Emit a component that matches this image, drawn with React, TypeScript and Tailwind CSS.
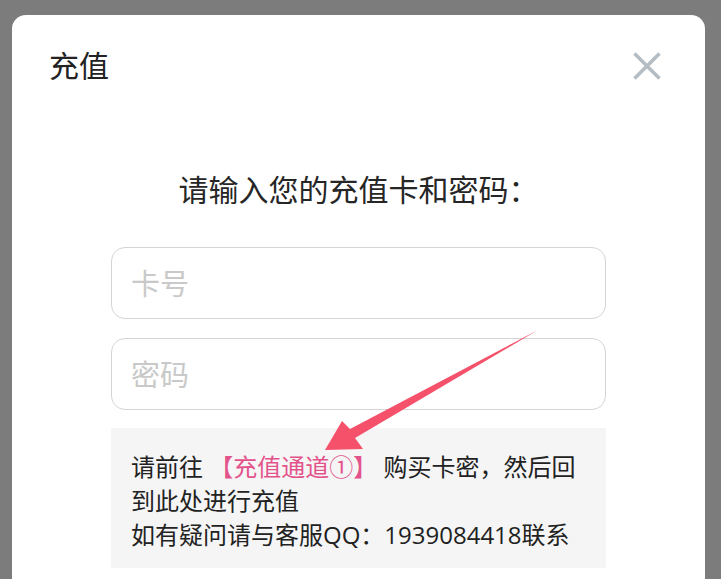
import React from 'react';

const cjk = "font-['Open_Sans','Noto_Sans_CJK_SC',sans-serif]";

const CloseIcon: React.FC = () => (
  <svg width="28" height="28" viewBox="0 0 28 28" fill="none">
    <path d="M1.5 1.5 L26.5 26.5 M26.5 1.5 L1.5 26.5" stroke="#b5bdc4" strokeWidth="3.6" strokeLinecap="butt" />
  </svg>
);

const Arrow: React.FC = () => (
  <svg className="absolute inset-0 pointer-events-none" width="721" height="579" viewBox="0 0 721 579">
    <polygon
      points="538,330 355,438 363,449 325,450 342,421 350,429"
      fill="#f5516a"
    />
  </svg>
);

const App: React.FC = () => {
  return (
    <div className={`relative h-[579px] overflow-hidden bg-[#7b7c7b] pt-[15px] pl-[12px] pr-[16px] ${cjk}`}>
      <div className="w-[693px] h-[620px] bg-white rounded-[14px]">
        <div className="flex items-center justify-between h-[101px] pl-[37px] pr-[44px]">
          <h2 className="text-[30px] leading-[40px] text-[#222]">充值</h2>
          <button className="flex items-center justify-center">
            <CloseIcon />
          </button>
        </div>

        <div className="px-[99px]">
          <p className="mt-[54px] text-center text-[30px] leading-[40px] text-[#262626]">
            请输入您的充值卡和密码：
          </p>

          <div className="mt-[37px] flex flex-col gap-[19px]">
            <input
              type="text"
              placeholder="卡号"
              className="w-full h-[72px] px-[19px] border border-[#d4d4d4] rounded-[14px] text-[29px] placeholder:text-[#c9c9c9] outline-none"
            />
            <input
              type="password"
              placeholder="密码"
              className="w-full h-[72px] px-[19px] border border-[#d4d4d4] rounded-[14px] text-[29px] placeholder:text-[#c9c9c9] outline-none"
            />
          </div>

          <div className="mt-[18px] bg-[#f5f5f5] h-[140px] px-[20px] pt-[22px] text-[24px] leading-[34px] text-[#222]">
            <div>
              请前往 <span className="text-[#e3538b]">【充值通道①】</span> 购买卡密，然后回
            </div>
            <div>到此处进行充值</div>
            <div>如有疑问请与客服QQ：1939084418联系</div>
          </div>
        </div>
      </div>
      <Arrow />
    </div>
  );
};

export default App;
